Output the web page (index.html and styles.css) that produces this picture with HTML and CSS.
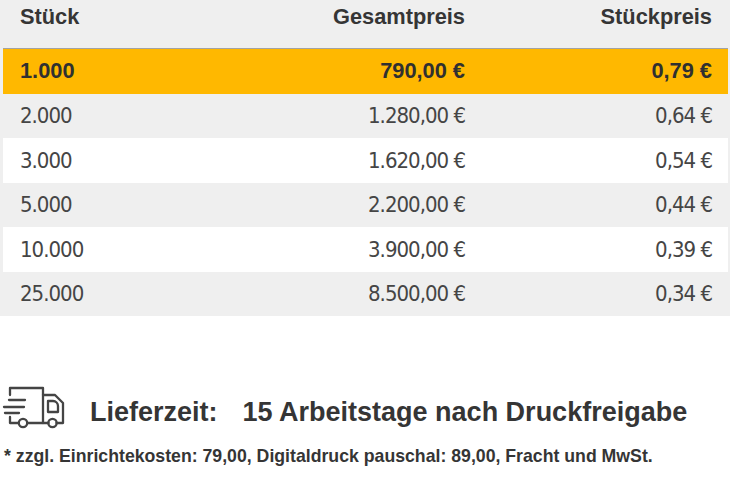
FILE: index.html
```html
<!DOCTYPE html>
<html lang="de">
<head>
<meta charset="utf-8">
<title>Staffelpreise</title>
<link rel="stylesheet" href="styles.css">
</head>
<body>
<div class="prices">
  <div class="row head">
    <span class="c1">Stück</span><span class="c2">Gesamtpreis</span><span class="c3">Stückpreis</span>
  </div>
  <div class="row active">
    <span class="c1">1.000</span><span class="c2">790,00 €</span><span class="c3">0,79 €</span>
  </div>
  <div class="row odd">
    <span class="c1">2.000</span><span class="c2">1.280,00 €</span><span class="c3">0,64 €</span>
  </div>
  <div class="row even">
    <span class="c1">3.000</span><span class="c2">1.620,00 €</span><span class="c3">0,54 €</span>
  </div>
  <div class="row odd">
    <span class="c1">5.000</span><span class="c2">2.200,00 €</span><span class="c3">0,44 €</span>
  </div>
  <div class="row even">
    <span class="c1">10.000</span><span class="c2">3.900,00 €</span><span class="c3">0,39 €</span>
  </div>
  <div class="row odd">
    <span class="c1">25.000</span><span class="c2">8.500,00 €</span><span class="c3">0,34 €</span>
  </div>
</div>

<div class="delivery">
  <svg class="truck" width="64" height="46" viewBox="0 0 64 46" aria-hidden="true">
    <g fill="none" stroke="#444" stroke-width="2.3" stroke-linecap="round" stroke-linejoin="round">
      <path d="M8 10 V3 H41 V38"/>
      <path d="M41 10 H53 L61 18 V38 H54.5"/>
      <path d="M46 16 H51 A5 5 0 0 1 56 21 V27 H46 Z"/>
      <path d="M25.5 38 H46.5"/>
      <path d="M8 32 V38 H16.5"/>
      <path d="M7 15 H23"/>
      <path d="M2 22 H22"/>
      <path d="M3 28 H17"/>
      <circle cx="21" cy="38" r="4.2"/>
      <circle cx="50.5" cy="38" r="4.2"/>
    </g>
  </svg>
  <div class="delivery-text">
    <span class="label">Lieferzeit:</span>
    <span class="value">15 Arbeitstage nach Druckfreigabe</span>
  </div>
</div>
<p class="note">* zzgl. Einrichtekosten: 79,00, Digitaldruck pauschal: 89,00, Fracht und MwSt.</p>
</body>
</html>
```

FILE: styles.css
```css
html, body {
  margin: 0;
  padding: 0;
  background: #ffffff;
}

body {
  font-family: "Liberation Sans", Arial, sans-serif;
  color: #353535;
}

.prices {
  background: #efefef;
  padding: 0 2px 0 3px;
}

.row {
  display: grid;
  grid-template-columns: 200px 245px 247px;
  align-items: center;
  height: 44.5px;
  padding: 0 16px 0 17px;
  box-sizing: border-box;
}

.row .c2,
.row .c3 {
  text-align: right;
}

.head {
  height: 49px;
  align-items: start;
  padding-top: 4px;
  border-bottom: 1px solid #a3a3a3;
  font-weight: bold;
  font-size: 21.8px;
  line-height: 26px;
  color: #353535;
}

.odd,
.even,
.active {
  font-family: "DejaVu Sans Condensed", "DejaVu Sans", "Liberation Sans", sans-serif;
  font-stretch: condensed;
  font-size: 22px;
  letter-spacing: -1px;
  color: #454545;
}

.odd {
  background: #efefef;
}

.even {
  background: #ffffff;
}

.active {
  background: #ffb800;
  font-family: "Liberation Sans", Arial, sans-serif;
  font-stretch: normal;
  font-weight: bold;
  font-size: 21.8px;
  letter-spacing: 0;
  color: #303030;
}

.delivery {
  display: flex;
  align-items: center;
  height: 46px;
  margin-top: 69px;
  padding-left: 2px;
}

.truck {
  display: block;
  flex: none;
}

.delivery-text {
  display: flex;
  gap: 25px;
  margin-left: 24px;
  margin-top: 7px;
  font-weight: bold;
  font-size: 27px;
  line-height: 32px;
  color: #353535;
}

.note {
  margin: 14px 0 0;
  padding-left: 4px;
  font-weight: bold;
  font-size: 17.7px;
  line-height: 22px;
  color: #353535;
}
```
